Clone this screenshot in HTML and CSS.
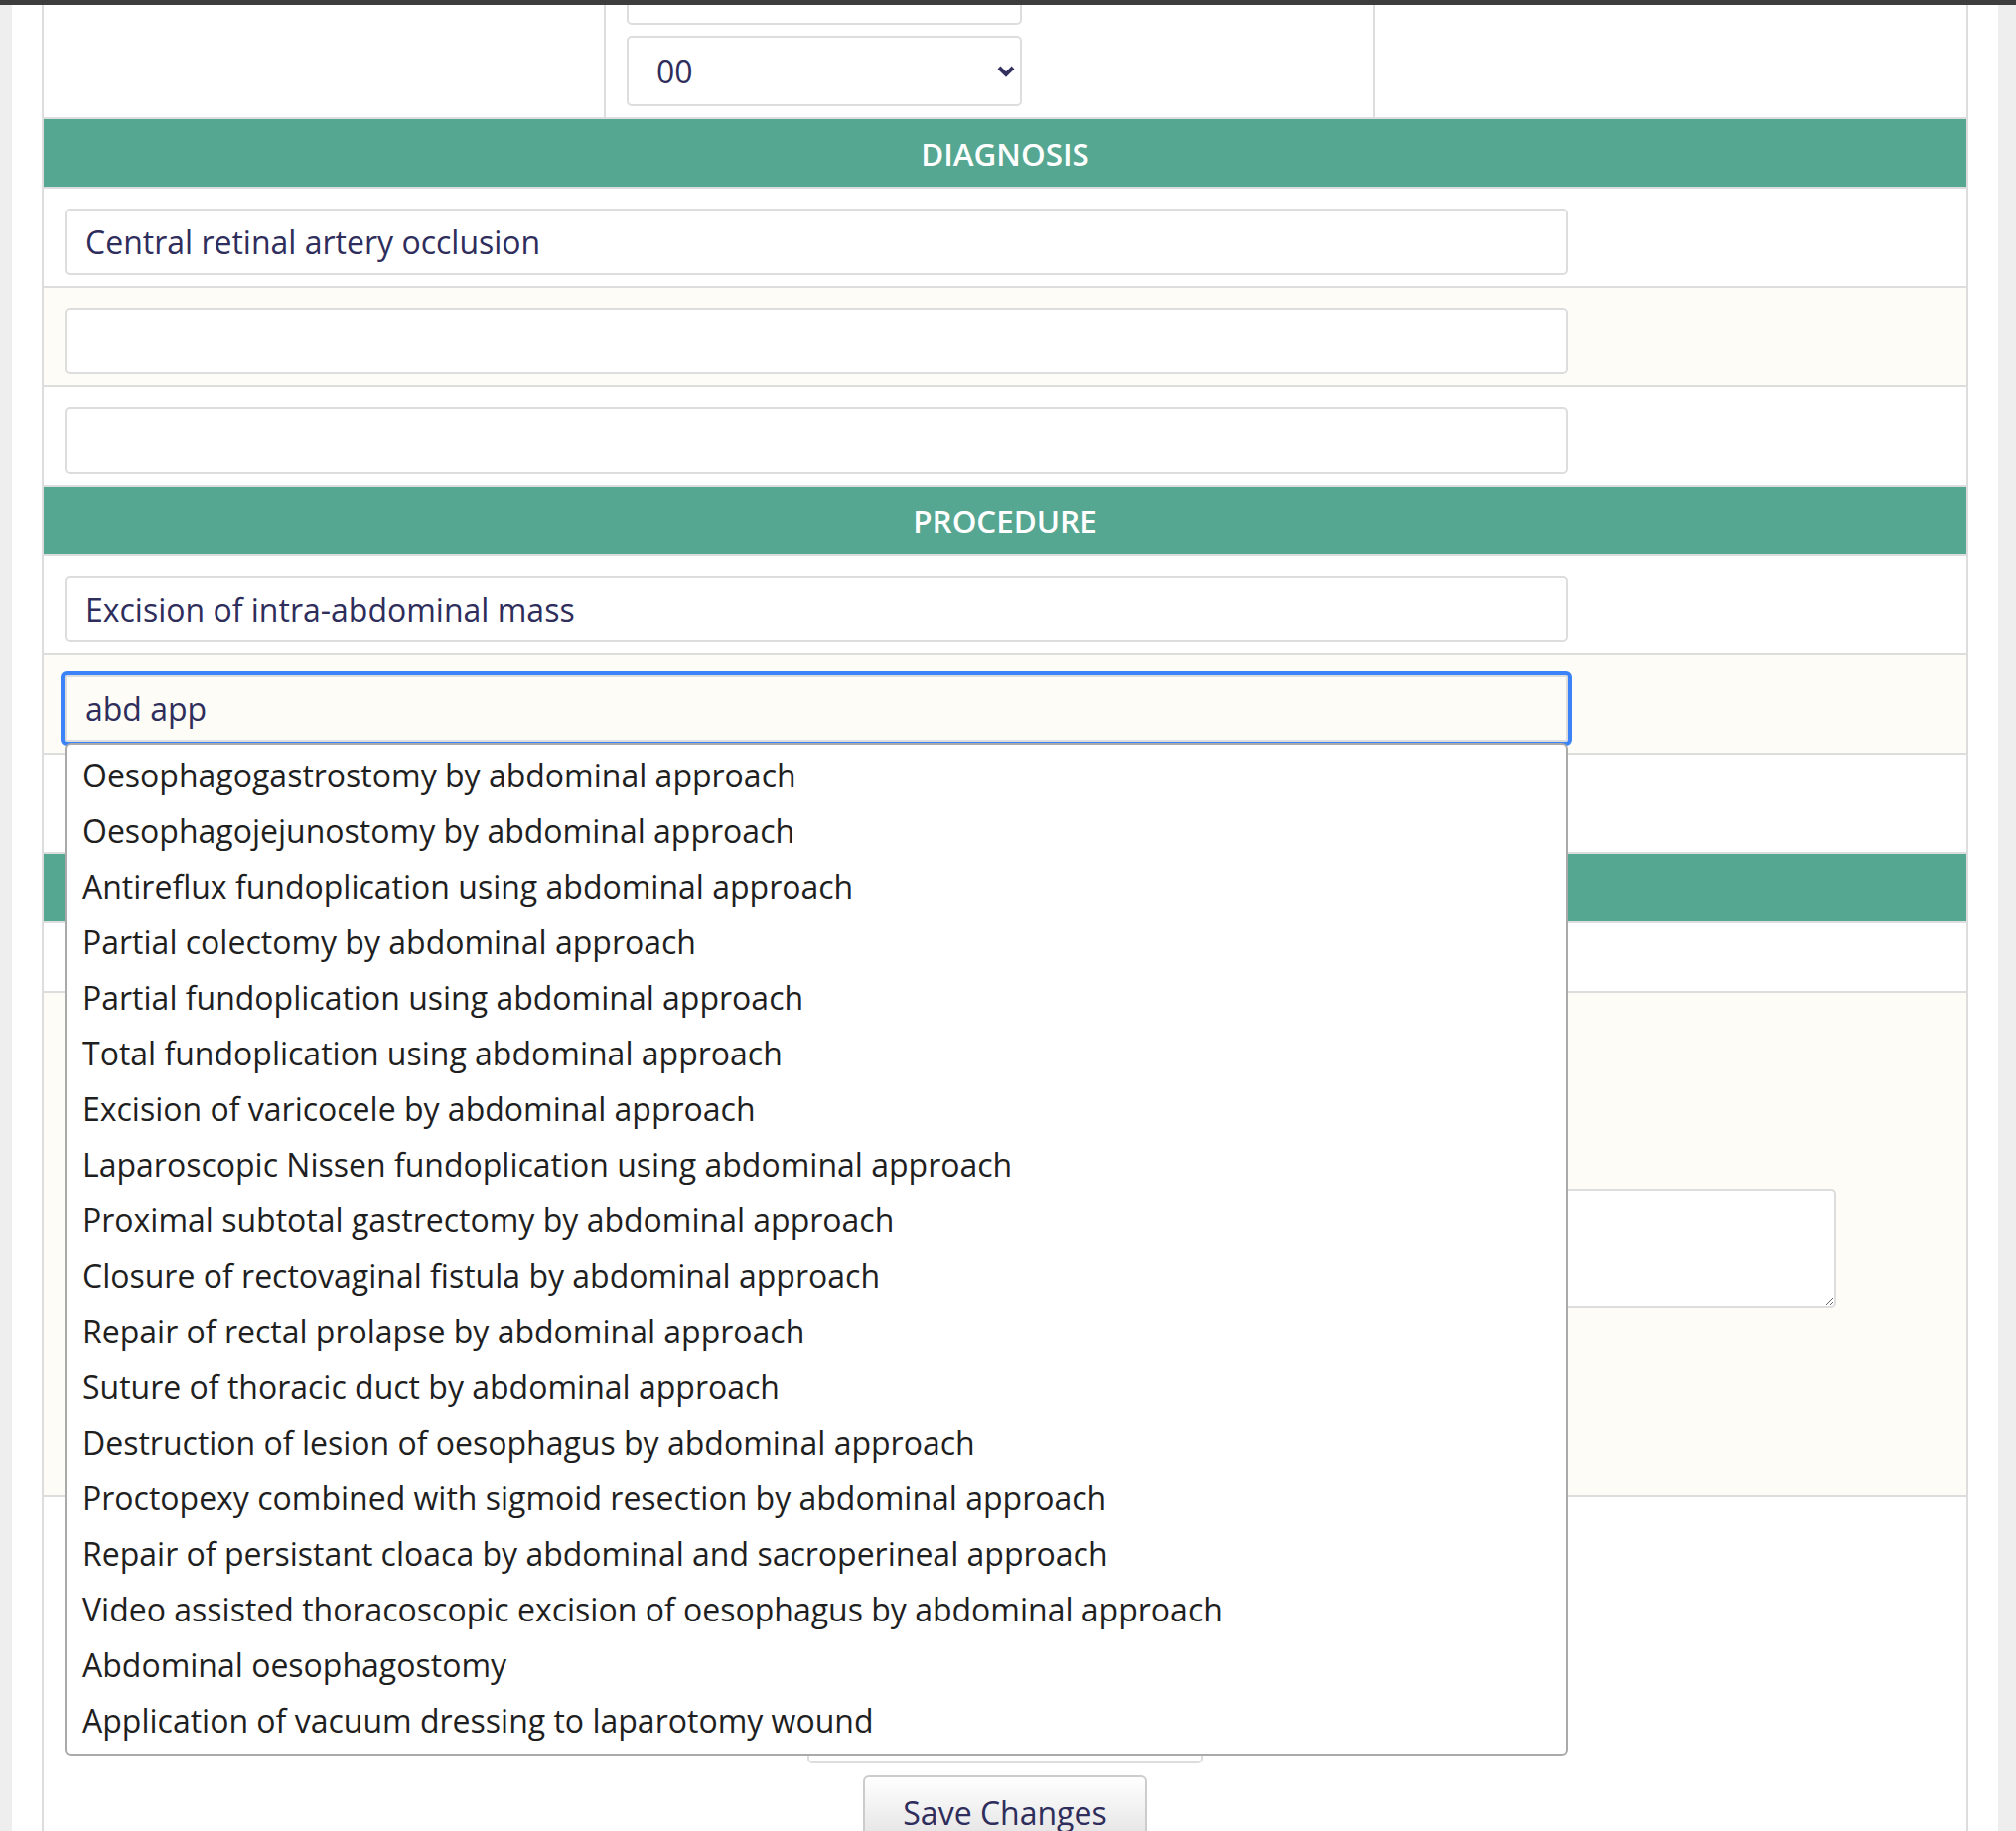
FILE: index.html
```html
<!DOCTYPE html>
<html lang="en">
<head>
<meta charset="utf-8">
<title>Operation record</title>
<link rel="stylesheet" href="styles.css">
</head>
<body>
<div class="topbar"></div>
<div class="page">
  <div class="sheet">
    <div class="row row-top">
      <div class="cell"></div>
      <div class="cell cell-mid">
        <input class="field field-narrow" type="text">
        <div class="select"><span>00</span><svg width="18" height="12" viewBox="0 0 18 12"><polyline points="2,2 9,9 16,2" fill="none" stroke="#33325f" stroke-width="4" stroke-linecap="butt" stroke-linejoin="miter"/></svg></div>
      </div>
      <div class="cell"></div>
    </div>

    <div class="head">DIAGNOSIS</div>
    <div class="row"><input class="field" type="text" value="Central retinal artery occlusion"></div>
    <div class="row alt"><input class="field" type="text"></div>
    <div class="row"><input class="field" type="text"></div>

    <div class="head">PROCEDURE</div>
    <div class="row"><input class="field" type="text" value="Excision of intra-abdominal mass"></div>
    <div class="row alt has-menu">
      <input class="field focused" type="text" value="abd app">
      <ul class="menu">
        <li>Oesophagogastrostomy by abdominal approach</li>
        <li>Oesophagojejunostomy by abdominal approach</li>
        <li>Antireflux fundoplication using abdominal approach</li>
        <li>Partial colectomy by abdominal approach</li>
        <li>Partial fundoplication using abdominal approach</li>
        <li>Total fundoplication using abdominal approach</li>
        <li>Excision of varicocele by abdominal approach</li>
        <li>Laparoscopic Nissen fundoplication using abdominal approach</li>
        <li>Proximal subtotal gastrectomy by abdominal approach</li>
        <li>Closure of rectovaginal fistula by abdominal approach</li>
        <li>Repair of rectal prolapse by abdominal approach</li>
        <li>Suture of thoracic duct by abdominal approach</li>
        <li>Destruction of lesion of oesophagus by abdominal approach</li>
        <li>Proctopexy combined with sigmoid resection by abdominal approach</li>
        <li>Repair of persistant cloaca by abdominal and sacroperineal approach</li>
        <li>Video assisted thoracoscopic excision of oesophagus by abdominal approach</li>
        <li>Abdominal oesophagostomy</li>
        <li>Application of vacuum dressing to laparotomy wound</li>
      </ul>
    </div>
    <div class="row"><input class="field" type="text"></div>

    <div class="head">NOTES</div>
    <div class="row row-short"></div>
    <div class="row alt row-notes"><textarea class="notes"></textarea></div>
    <div class="row row-actions">
      <input class="field field-narrow" type="text">
      <button class="btn" type="button">Save Changes</button>
    </div>
  </div>
</div>
</body>
</html>
```

FILE: styles.css
```css
* { box-sizing: border-box; }

html, body { margin: 0; padding: 0; }

body {
  background: #eeeeee;
  font-family: "Open Sans", "Noto Sans", sans-serif;
  font-size: 32px;
  color: #2e2d5b;
  overflow: hidden;
}

.topbar {
  position: fixed;
  top: 0;
  left: 0;
  right: 0;
  height: 5px;
  background: #3d3d3d;
  z-index: 50;
}

.page {
  margin: 0 18px 0 12px;
  padding: 0 30px;
  background: #ffffff;
  min-height: 1844px;
}

.sheet {
  margin-top: -64px;
  border: 2px solid #dddddd;
  border-bottom: none;
}

.row {
  border-bottom: 2px solid #dddddd;
  padding: 20px 21px 11px;
  background: #ffffff;
}

.row.alt { background: #fdfcf6; }

.row-top {
  display: grid;
  grid-template-columns: 566px 775px 1fr;
  padding: 0;
}

.cell { border-right: 2px solid #dddddd; }
.cell:last-child { border-right: none; }

.cell-mid {
  padding: 20px 0 11px 21px;
  display: flex;
  flex-direction: column;
  gap: 11px;
}

.field {
  display: block;
  width: 1514px;
  height: 67px;
  margin: 0;
  border: 2px solid #dddddd;
  border-radius: 5px;
  padding: 0 19px;
  font: inherit;
  color: inherit;
  background: #ffffff;
}

.field-narrow { width: 398px; }

.field.focused {
  background: #fdfcf6;
  border-radius: 2px;
  outline: 4px solid #3b83f6;
  outline-offset: 0;
}

.select {
  width: 398px;
  height: 71px;
  border: 2px solid #dddddd;
  border-radius: 5px;
  display: flex;
  align-items: center;
  justify-content: space-between;
  padding: 0 5px 0 28px;
}

.select svg { display: block; margin-top: 1px; }

.head {
  height: 70px;
  border-bottom: 2px solid #dddddd;
  background: #56a791;
  color: #ffffff;
  font-size: 31.4px;
  font-weight: 600;
  display: flex;
  align-items: center;
  justify-content: center;
}

.has-menu { position: relative; }

.menu {
  position: absolute;
  top: 88px;
  left: 21px;
  width: 1514px;
  margin: 0;
  padding: 3px 0 5px;
  list-style: none;
  background: #ffffff;
  border: 2px solid #aaaaaa;
  border-radius: 6px;
  z-index: 20;
  color: #1f1f1f;
}

.menu li {
  height: 56px;
  line-height: 56px;
  padding: 0 16px;
  white-space: nowrap;
}

.row-short { height: 70px; padding: 0; }

.row-notes {
  display: flex;
  justify-content: flex-end;
  padding: 197px 131px 189px 0;
}

.notes {
  display: block;
  width: 670px;
  height: 120px;
  margin: 0;
  border: 2px solid #dddddd;
  border-radius: 5px;
  background: #ffffff;
  font: inherit;
}

.row-actions {
  display: flex;
  flex-direction: column;
  align-items: center;
  gap: 12px;
  padding: 201px 0 40px;
  border-bottom: none;
}

.btn {
  width: 286px;
  height: 74px;
  border: 2px solid #cccccc;
  border-radius: 6px;
  background: linear-gradient(#ffffff, #e0e0e0);
  font: inherit;
  color: #2e2d5b;
  padding: 0;
}
```
